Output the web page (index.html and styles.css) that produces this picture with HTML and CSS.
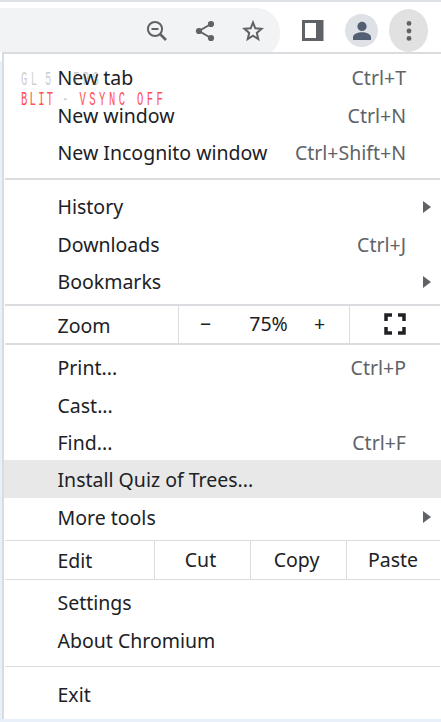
FILE: index.html
```html
<!DOCTYPE html>
<html lang="en">
<head>
<meta charset="utf-8">
<title>Browser menu</title>
<link rel="stylesheet" href="styles.css">
</head>
<body>
<header class="toolbar">
  <div class="omnibox">
    <svg class="icon" width="22" height="22" viewBox="0 0 22 22"><circle cx="9" cy="9" r="7.1"/><path d="M5.5 9h7"/><path stroke-width="2.6" d="m14 14 6 6"/></svg>
    <svg class="icon" width="22" height="22" viewBox="0 0 22 22"><path d="M17 4 5 11l12 7"/><g class="solid"><circle cx="17" cy="4" r="3.1"/><circle cx="5" cy="11" r="3.1"/><circle cx="17" cy="18" r="3.1"/></g></svg>
    <svg class="icon star" width="22" height="22" viewBox="0 0 22 22"><path d="m11 2.500 2.300 5.800 6.300.5-4.800 4.100 1.500 6.100-5.300-3.300-5.300 3.300 1.500-6.100-4.800-4.100 6.300-.5z"/></svg>
  </div>
  <svg class="panel" width="22" height="22" viewBox="0 0 22 22"><path fill="#5f6368" fill-rule="evenodd" d="M0 0h21.5v21H0zM3 3v15h11V3z"/></svg>
  <div class="avatar"><svg width="20" height="20" viewBox="0 0 20 20"><circle cx="10" cy="5.4" r="4.6"/><path d="M1 19v-3c0-3 5-4.8 9-4.8s9 1.800 9 4.800v3z"/></svg></div>
  <div class="more"><svg width="6" height="22" viewBox="0 0 6 22"><circle cx="3" cy="3.400" r="2.400"/><circle cx="3" cy="11" r="2.400"/><circle cx="3" cy="18.400" r="2.400"/></svg></div>
</header>
<main class="menu">
  <section class="group first">
    <div class="row"><span>New tab</span><kbd>Ctrl+T</kbd></div>
    <div class="row"><span>New window</span><kbd>Ctrl+N</kbd></div>
    <div class="row"><span>New Incognito window</span><kbd>Ctrl+Shift+N</kbd></div>
  </section>
  <section class="group second">
    <div class="row"><span>History</span><i class="arrow"></i></div>
    <div class="row"><span>Downloads</span><kbd>Ctrl+J</kbd></div>
    <div class="row"><span>Bookmarks</span><i class="arrow"></i></div>
  </section>
  <section class="split zoom">
    <span class="label">Zoom</span>
    <div class="controls"><span class="minus">−</span><span class="value">75%</span><span class="plus">+</span></div>
    <div class="full"><svg width="22" height="22" viewBox="0 0 22 22"><path d="M2 8V2h6M14 2h6v6M20 14v6h-6M8 20H2v-6"/></svg></div>
  </section>
  <section class="group third">
    <div class="row"><span>Print...</span><kbd>Ctrl+P</kbd></div>
    <div class="row"><span>Cast...</span></div>
    <div class="row"><span>Find...</span><kbd>Ctrl+F</kbd></div>
    <div class="row selected"><span>Install Quiz of Trees...</span></div>
    <div class="row"><span>More tools</span><i class="arrow"></i></div>
  </section>
  <section class="split edit">
    <span class="label">Edit</span><span class="cell cut">Cut</span><span class="cell copy">Copy</span><span class="cell paste">Paste</span>
  </section>
  <section class="group fourth">
    <div class="row"><span>Settings</span></div>
    <div class="row"><span>About Chromium</span></div>
  </section>
  <section class="group last">
    <div class="row"><span>Exit</span></div>
  </section>
</main>
<div class="overlay">
  <div class="line gl"><span class="w1">GL</span><span class="w2">5</span><span>FPS</span></div>
  <div class="line blit"><span class="b1">BLIT</span><span class="b2">-</span><span class="b3">VSYNC</span><span>OFF</span></div>
</div>
</body>
</html>
```
FILE: styles.css
```css
* { box-sizing: border-box; }
body {
  margin: 0;
  width: 441px;
  height: 722px;
  overflow: hidden;
  background: linear-gradient(#fff 61px, #e8f1f9 61px);
  color: #202124;
  font: 19.5px/37.5px "Noto Sans", sans-serif;
}
.toolbar {
  display: flex;
  align-items: flex-start;
  height: 52px;
  border-top: 2px solid #dee1e6;
  background: #fff;
  overflow: hidden;
}
.omnibox {
  display: flex;
  flex: none;
  gap: 26px;
  width: 280px;
  height: 50px;
  margin-top: 6px;
  padding: 12px 0 0 146px;
  border-radius: 0 24px 24px 0;
  background: #f1f3f4;
}
.icon { fill: none; stroke: #5f6368; stroke-width: 2; }
.icon .solid { fill: #5f6368; stroke: none; }
.panel { flex: none; margin: 18px 0 0 22px; }
.avatar, .more { display: flex; flex: none; align-items: center; justify-content: center; border-radius: 50%; }
.avatar { width: 33px; height: 33px; margin: 12px 0 0 21px; background: #dee1e6; fill: #535f73; }
.more { width: 39px; height: 43px; margin: 7px 0 0 11px; background: #e1e1e1; fill: #5f6368; }
.menu {
  width: 439px;
  height: 667px;
  margin-left: 2px;
  border-top: 2px solid #dadce0;
  border-left: 2px solid #d5dce2;
  background: #fff;
}
.group, .split { position: relative; }
.group + .group::before, .split::before, .split::after {
  content: "";
  position: absolute;
  left: 1px;
  right: 1px;
  top: 0;
  height: 2px;
  background: #dadce0;
}
.split::after { top: auto; bottom: 0; }
.first { height: 124px; padding-top: 5px; }
.second { height: 126px; padding-top: 10px; }
.third { height: 195px; padding-top: 3px; }
.fourth { height: 86px; padding-top: 4px; }
.last { padding-top: 10px; }
.group.last::before, .edit::before, .edit::after { height: 1px; }
.row { display: flex; justify-content: space-between; height: 37.5px; padding: 0 35px 0 53.5px; }
.third .row { line-height: 39px; }
kbd { color: #5f6368; font: inherit; }
.third kbd { line-height: 39px; }
.arrow {
  align-self: center;
  margin-right: -25px;
  border-left: 8px solid #5f6368;
  border-top: 6px solid transparent;
  border-bottom: 6px solid transparent;
}
.selected { margin-top: -.5px; background: #e8e8e8; }
.third .selected { height: 38px; }
.split { display: grid; }
.zoom { grid-template-columns: 174px 172px 1fr; height: 41px; }
.edit { grid-template-columns: 150px 96px 96px 1fr; height: 40px; }
.label { padding: 3px 0 0 53.5px; }
.edit .label { padding-top: 2px; }
.controls { display: grid; grid-template-columns: 53px 73px 1fr; padding-top: 1px; text-align: center; border: solid #dadce0; border-width: 0 1px; }
.plus { padding-right: 15px; }
.full { display: grid; justify-content: center; padding: 9px 1px 0 0; }
.full svg { fill: none; stroke: #202124; stroke-width: 3.500; }
.cell { border-left: 1px solid #dadce0; text-align: center; padding-top: 1px; }
.cut { padding-right: 4px; }
.copy { padding-right: 4px; }
.paste { padding-right: 2px; }
.overlay {
  position: absolute;
  left: 20.5px;
  top: 70px;
  font: 21px/20px "Liberation Mono", monospace;
  transform: scaleX(.5);
  transform-origin: 0 0;
}
.line { display: flex; letter-spacing: 7px; }
.line span { flex: none; }
.gl, .b2 { color: rgba(120, 120, 120, .38); }
.blit { color: #ff5050; }
.w1 { width: 48px; }
.w2 { width: 56px; }
.b1 { width: 82px; letter-spacing: 4.600px; }
.b2 { width: 35px; }
.b3 { width: 115px; }
```
